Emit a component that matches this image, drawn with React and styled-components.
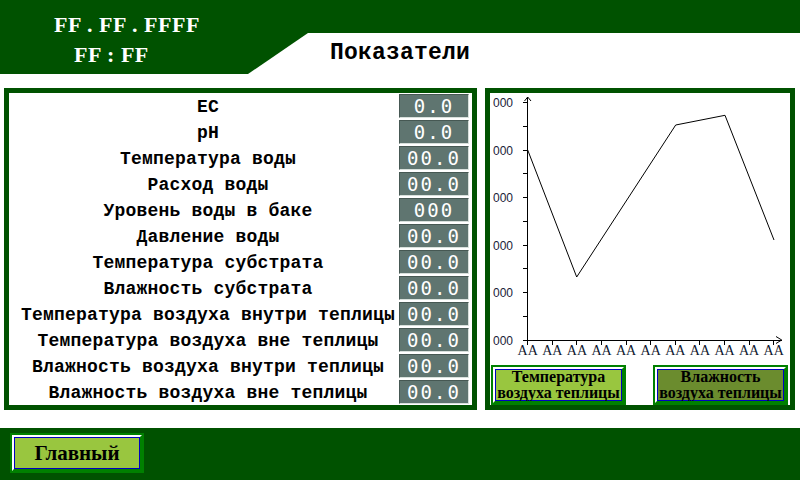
import React from 'react';
import styled, { createGlobalStyle } from 'styled-components';

const GREEN = '#005200';

const GlobalStyle = createGlobalStyle`
  html, body {
    margin: 0;
    padding: 0;
    background: #ffffff;
  }
  body {
    width: 800px;
    height: 480px;
    overflow: hidden;
  }
`;

const Screen = styled.div`
  width: 800px;
  height: 480px;
  display: flex;
  flex-direction: column;
  background: #ffffff;
`;

// --- header ---

const Header = styled.header`
  display: grid;
  grid-template-columns: 308px 1fr;
  height: 74px;
`;

const ClockBlock = styled.div`
  background: ${GREEN};
  clip-path: polygon(0 0, 100% 0, 100% 33px, 248px 74px, 0 74px);
  display: flex;
  flex-direction: column;
  padding-top: 10px;
  box-sizing: border-box;
`;

const ClockText = styled.div`
  font-family: 'Liberation Serif', 'Times New Roman', serif;
  font-weight: 700;
  font-size: 22px;
  letter-spacing: 0.5px;
  line-height: 30px;
  color: #ffffff;
  white-space: pre;
  padding-left: ${(p) => p.$indent}px;
`;

const TitleSide = styled.div`
  display: flex;
  flex-direction: column;
`;

const TopStrip = styled.div`
  height: 33px;
  background: ${GREEN};
`;

const Title = styled.h1`
  margin: 0;
  padding-left: 22px;
  font-family: 'Liberation Mono', 'Courier New', monospace;
  font-weight: 700;
  font-size: 23px;
  letter-spacing: 0.2px;
  line-height: 41px;
  color: #000000;
`;

// --- main panels ---

const Main = styled.main`
  display: flex;
  gap: 8px;
  padding: 14px 5px 18px 4px;
  height: 322px;
`;

const Panel = styled.section`
  width: ${(p) => p.$width}px;
  height: 322px;
  box-sizing: border-box;
  border: 5px solid ${GREEN};
  background: #ffffff;
  display: flex;
  flex-direction: column;
`;

const Row = styled.div`
  display: grid;
  grid-template-columns: 1fr 70px;
  height: 26px;
  padding-right: 3px;
`;

const Label = styled.div`
  font-family: 'Liberation Mono', 'Courier New', monospace;
  font-weight: 700;
  font-size: 18px;
  letter-spacing: 0.2px;
  line-height: 26px;
  padding: 1px 0 0 8px;
  text-align: center;
  white-space: nowrap;
  color: #000000;
`;

const Value = styled.div`
  margin-top: 1px;
  height: 24px;
  box-sizing: border-box;
  background: #5f7570;
  border: 1px solid;
  border-color: #465853 #d8e0dc #d8e0dc #465853;
  font-family: 'DejaVu Sans Mono', monospace;
  font-size: 19px;
  letter-spacing: 2px;
  line-height: 22px;
  text-align: center;
  color: #ffffff;
`;

const ChartArea = styled.div`
  height: 274px;
`;

const ButtonRow = styled.div`
  display: flex;
  justify-content: space-between;
  padding: 0 4px 0 3px;
`;

const SwitchButton = styled.button`
  width: ${(p) => p.$width}px;
  height: 36px;
  box-sizing: border-box;
  padding: 0;
  border: 2px solid;
  border-color: #ffffff #008000 #008000 #ffffff;
  box-shadow: 0 0 0 2px #008000, inset 0 0 0 1px #0000c0;
  background: ${(p) => (p.$active ? '#6b8c2e' : '#99c63f')};
  font-family: 'Liberation Serif', 'Times New Roman', serif;
  font-weight: 700;
  font-size: ${(p) => p.$size}px;
  line-height: ${(p) => p.$lineHeight || 20}px;
  color: #000000;
  overflow: hidden;
  white-space: nowrap;
`;

// --- footer ---

const Footer = styled.footer`
  height: 52px;
  background: ${GREEN};
  padding: 7px 12px;
  box-sizing: border-box;
`;

// --- chart ---

const axisX = 37.7;
const axisY = 247;
const yTicks = [9, 57, 104, 152, 199, 247];
const xStep = 24.6;
const points = [
  [37.7, 57],
  [86.7, 184],
  [185.7, 32],
  [235, 22.3],
  [284, 147],
];

function LineChart() {
  const minor = yTicks.slice(0, -1).map((y, i) => (y + yTicks[i + 1]) / 2);
  const xs = Array.from({ length: 11 }, (_, i) => axisX + i * xStep);
  return (
    <svg width="300" height="274" viewBox="0 0 300 274">
      <g stroke="#000" strokeWidth="1" fill="none" shapeRendering="crispEdges">
        <line x1={axisX} y1={4} x2={axisX} y2={axisY + 5} />
        <line x1={32.7} y1={axisY} x2={291.7} y2={axisY} />
        {[...yTicks, ...minor].map((y) => (
          <line key={y} x1={32.7} y1={y} x2={axisX} y2={y} />
        ))}
        {xs.map((x) => (
          <line key={x} x1={x} y1={axisY} x2={x} y2={axisY + 5} />
        ))}
      </g>
      <g stroke="#000" strokeWidth="1" fill="none">
        <polyline points={`34.5,8 ${axisX},4 41,8`} />
        <polyline points={`286,243.5 291.7,${axisY} 286,250.5`} />
        <polyline points={points.map((p) => p.join(',')).join(' ')} />
      </g>
      {yTicks.map((y) => (
        <text
          key={y}
          x="3"
          y={y + 5}
          fontFamily="'Liberation Sans', Arial, sans-serif"
          fontSize="12"
          fill="#1a2238"
        >
          000
        </text>
      ))}
      {xs.map((x) => (
        <text
          key={x}
          x={x}
          y="262"
          textAnchor="middle"
          fontFamily="'Liberation Serif', 'Times New Roman', serif"
          fontSize="14"
          fill="#101830"
        >
          AA
        </text>
      ))}
    </svg>
  );
}

const readings = [
  ['EC', '0.0'],
  ['pH', '0.0'],
  ['Температура воды', '00.0'],
  ['Расход воды', '00.0'],
  ['Уровень воды в баке', '000'],
  ['Давление воды', '00.0'],
  ['Температура субстрата', '00.0'],
  ['Влажность субстрата', '00.0'],
  ['Температура воздуха внутри теплицы', '00.0'],
  ['Температура воздуха вне теплицы', '00.0'],
  ['Влажность воздуха внутри теплицы', '00.0'],
  ['Влажность воздуха вне теплицы', '00.0'],
];

export default function App() {
  return (
    <Screen>
      <GlobalStyle />
      <Header>
        <ClockBlock>
          <ClockText $indent={54}>FF . FF . FFFF</ClockText>
          <ClockText $indent={74}>FF : FF</ClockText>
        </ClockBlock>
        <TitleSide>
          <TopStrip />
          <Title>Показатели</Title>
        </TitleSide>
      </Header>

      <Main>
        <Panel $width={473}>
          {readings.map(([name, value]) => (
            <Row key={name}>
              <Label>{name}</Label>
              <Value>{value}</Value>
            </Row>
          ))}
        </Panel>

        <Panel $width={310}>
          <ChartArea>
            <LineChart />
          </ChartArea>
          <ButtonRow>
            <SwitchButton $width={131} $size={16} $lineHeight={16}>
              Температура
              <br />
              воздуха теплицы
            </SwitchButton>
            <SwitchButton $width={131} $size={16} $lineHeight={16} $active>
              Влажность
              <br />
              воздуха теплицы
            </SwitchButton>
          </ButtonRow>
        </Panel>
      </Main>

      <Footer>
        <SwitchButton $width={130} $size={21}>
          Главный
        </SwitchButton>
      </Footer>
    </Screen>
  );
}
